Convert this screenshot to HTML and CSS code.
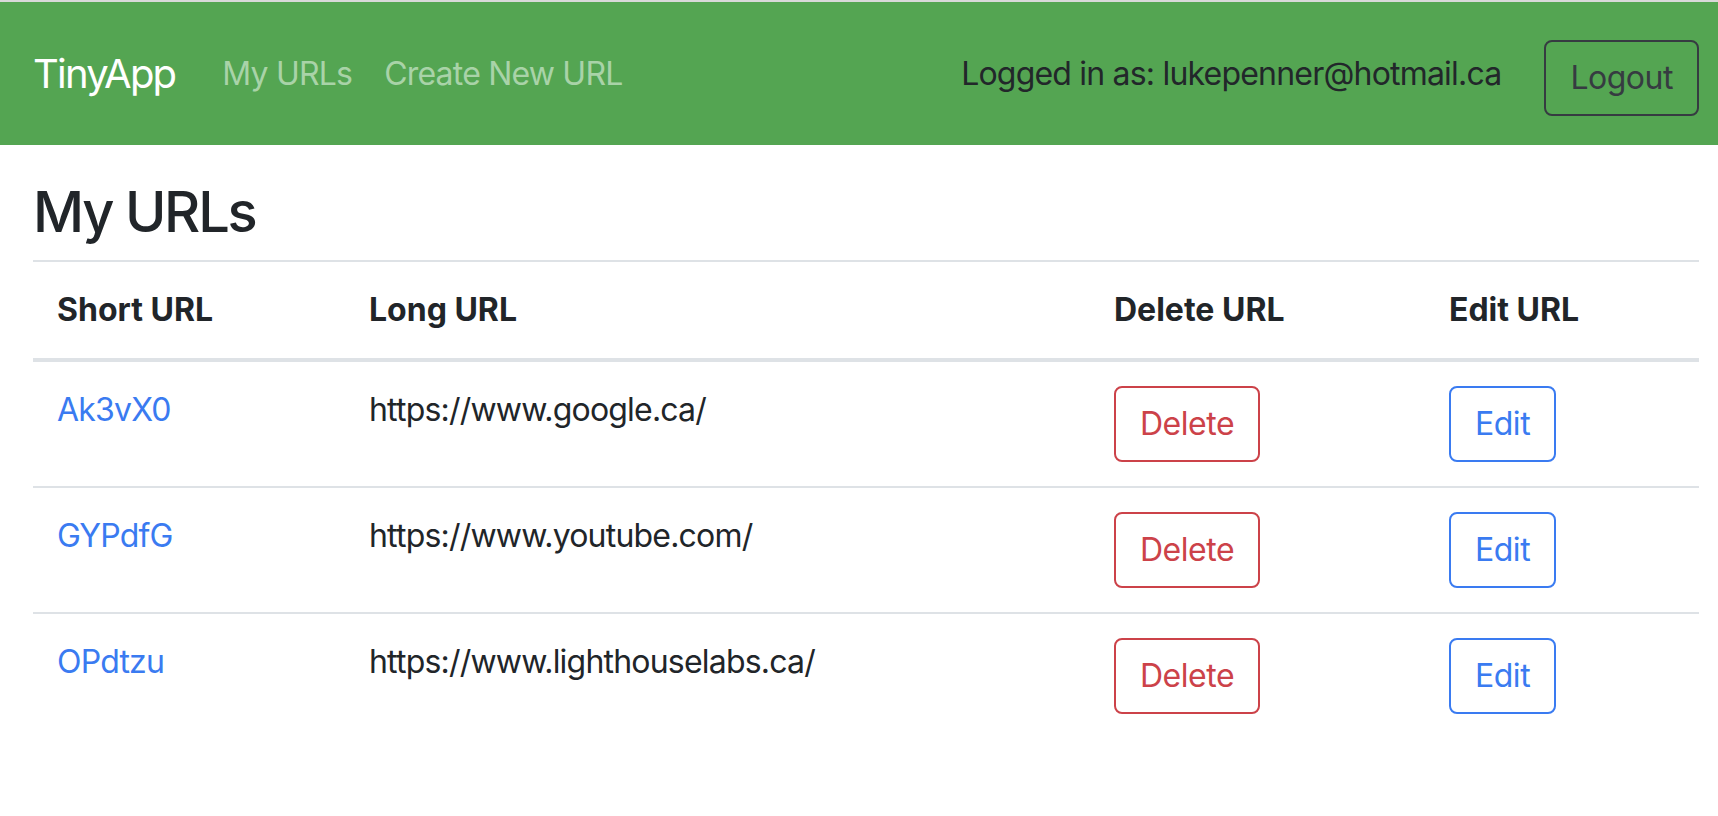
FILE: index.html
```html
<!DOCTYPE html>
<html lang="en">
<head>
<meta charset="utf-8">
<title>TinyApp - My URLs</title>
<link rel="stylesheet" href="styles.css">
</head>
<body>
<div class="topline"></div>
<nav class="navbar">
  <a class="brand" href="#">TinyApp</a>
  <ul class="nav-links">
    <li><a class="nav-link" href="#">My URLs</a></li>
    <li><a class="nav-link" href="#">Create New URL</a></li>
  </ul>
  <div class="user">
    <span class="user-text">Logged in as: lukepenner@hotmail.ca</span>
    <button class="btn btn-dark-outline" type="button">Logout</button>
  </div>
</nav>
<main class="container">
  <h1 class="page-title">My URLs</h1>
  <table class="url-table">
    <thead>
      <tr>
        <th class="col-short">Short URL</th>
        <th class="col-long">Long URL</th>
        <th class="col-delete">Delete URL</th>
        <th class="col-edit">Edit URL</th>
      </tr>
    </thead>
    <tbody>
      <tr>
        <td><a class="short-link" href="#">Ak3vX0</a></td>
        <td>https://www.google.ca/</td>
        <td><button class="btn btn-danger-outline" type="button">Delete</button></td>
        <td><button class="btn btn-primary-outline" type="button">Edit</button></td>
      </tr>
      <tr>
        <td><a class="short-link" href="#">GYPdfG</a></td>
        <td>https://www.youtube.com/</td>
        <td><button class="btn btn-danger-outline" type="button">Delete</button></td>
        <td><button class="btn btn-primary-outline" type="button">Edit</button></td>
      </tr>
      <tr>
        <td><a class="short-link" href="#">OPdtzu</a></td>
        <td>https://www.lighthouselabs.ca/</td>
        <td><button class="btn btn-danger-outline" type="button">Delete</button></td>
        <td><button class="btn btn-primary-outline" type="button">Edit</button></td>
      </tr>
    </tbody>
  </table>
</main>
</body>
</html>
```
FILE: styles.css
```css
* { box-sizing: border-box; }

html, body {
  margin: 0;
  padding: 0;
  background: #ffffff;
}

body {
  font-family: Inter, "Noto Sans", "Liberation Sans", sans-serif;
  font-size: 32px;
  line-height: 48px;
  letter-spacing: -0.025em;
  color: #212529;
}

.topline {
  height: 2px;
  background: #d9d9d9;
}

.navbar {
  height: 143px;
  background: #54a552;
  display: flex;
  align-items: center;
  padding: 0 19px 0 33px;
}

.brand {
  font-size: 40px;
  line-height: 60px;
  letter-spacing: -0.045em;
  color: #ffffff;
  text-decoration: none;
  margin-right: 31px;
}

.nav-links {
  list-style: none;
  display: flex;
  margin: 0;
  padding: 0;
  flex: 1;
}

.nav-link {
  display: block;
  padding: 0 16px;
  color: #a9d3a8;
  text-decoration: none;
}

.user {
  display: flex;
  align-items: center;
}

.user-text {
  color: #22272a;
  margin-right: 43px;
}

.btn {
  font-family: inherit;
  font-size: 32px;
  line-height: 48px;
  letter-spacing: -0.015em;
  padding: 12px 24px;
  border: 2px solid;
  border-radius: 8px;
  background: transparent;
  cursor: pointer;
}

.btn-dark-outline {
  color: #363b41;
  border-color: #363b41;
  margin-top: 8px;
}

.btn-danger-outline {
  color: #cc4249;
  border-color: #cc4249;
}

.btn-primary-outline {
  color: #3a7bf1;
  border-color: #3a7bf1;
}

.container {
  padding: 0 19px 0 33px;
}

.page-title {
  font-size: 56px;
  line-height: 67px;
  font-weight: 500;
  letter-spacing: -0.04em;
  margin: 34px 0 14px;
}

.url-table {
  width: 100%;
  border-collapse: collapse;
  table-layout: fixed;
}

.url-table th,
.url-table td {
  text-align: left;
  vertical-align: top;
  padding: 24px;
  border-top: 2px solid #dee2e6;
}

.url-table th {
  font-weight: 700;
  letter-spacing: 0;
  border-bottom: 4px solid #dee2e6;
}

.col-short { width: 312px; }
.col-long { width: 745px; }
.col-delete { width: 335px; }
.col-edit { width: auto; }

.short-link {
  color: #3a7bf1;
  text-decoration: none;
}
```
